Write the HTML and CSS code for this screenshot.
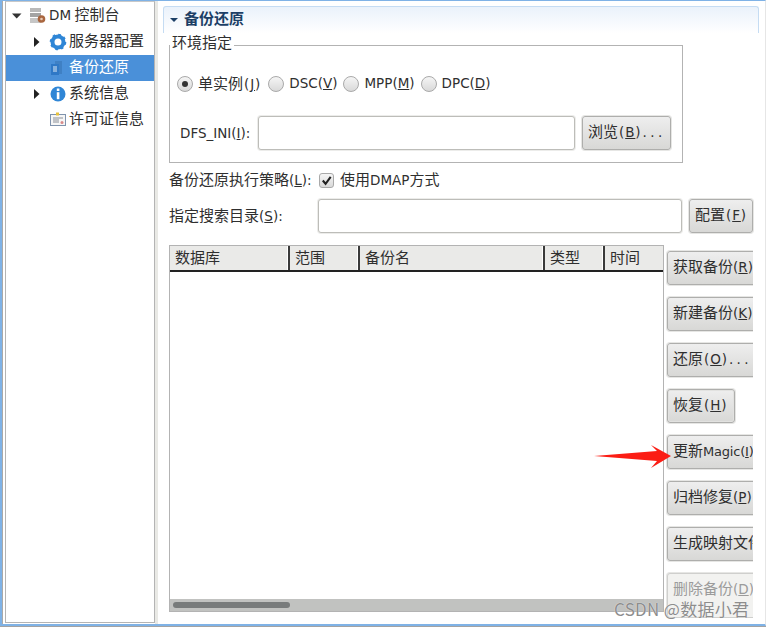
FILE: index.html
```html
<!DOCTYPE html>
<html lang="zh">
<head>
<meta charset="utf-8">
<title>DM 控制台</title>
<link rel="stylesheet" href="styles.css">
</head>
<body>
<div class="app">
  <aside class="tree">
    <div class="node">
      <svg class="tw" viewBox="0 0 12 12"><path d="M1 3.500h9.500L5.700 8.500z" fill="#333"/></svg>
      <svg class="ic" viewBox="0 0 18 18"><rect x="1" y="1" width="11" height="4" fill="#b9b9b9"/><rect x="1" y="6" width="11" height="4" fill="#a4a4a4"/><rect x="1" y="11" width="11" height="5" fill="#c6c6c6"/><circle cx="12.500" cy="12" r="3.800" fill="#a9663f"/><circle cx="12.500" cy="12" r="1.300" fill="#e6c9b5"/></svg>
      <span class="nl"><span class="l">DM</span> 控制台</span>
    </div>
    <div class="node sub">
      <svg class="tw" viewBox="0 0 12 12"><path d="M3 1l5.500 5L3 11z" fill="#222"/></svg>
      <svg class="ic" viewBox="0 0 18 18"><circle cx="9" cy="9" r="5.500" fill="none" stroke="#2f86d6" stroke-width="4"/><circle cx="9" cy="9" r="7.300" fill="none" stroke="#2f86d6" stroke-width="2" stroke-dasharray="2.600 3.130"/></svg>
      <span class="nl">服务器配置</span>
    </div>
    <div class="node sub sel">
      <span class="tw"></span>
      <svg class="ic" viewBox="0 0 18 18"><path d="M6 2h7v13H6z" fill="#3f80c4"/><path d="M2 5h8v11H2z" fill="#2f78c6"/><path d="M4 8h4M4 10h4M4 12h4" stroke="#dfeaf6" stroke-width="1"/></svg>
      <span class="nl">备份还原</span>
    </div>
    <div class="node sub">
      <svg class="tw" viewBox="0 0 12 12"><path d="M3 1l5.500 5L3 11z" fill="#222"/></svg>
      <svg class="ic" viewBox="0 0 18 18"><circle cx="9" cy="9" r="7.500" fill="#2f86d6"/><rect x="7.800" y="3.500" width="2.600" height="2.500" fill="#fff"/><rect x="7.800" y="7.200" width="2.600" height="7" fill="#fff"/></svg>
      <span class="nl">系统信息</span>
    </div>
    <div class="node sub">
      <span class="tw"></span>
      <svg class="ic" viewBox="0 0 18 18"><rect x="1.500" y="3.500" width="15" height="11" fill="#f6f6f6" stroke="#7f93ad"/><path d="M4 7h10M4 9h6M4 11h6" stroke="#8a8f98"/><rect x="7" y="1.500" width="3" height="3" fill="#e8c23c"/><circle cx="13" cy="11.500" r="1.500" fill="#d98a8a"/></svg>
      <span class="nl">许可证信息</span>
    </div>
  </aside>
  <div class="sash"></div>
  <main class="main">
    <header class="sec-head">
      <svg class="sec-tw" viewBox="0 0 10 10"><path d="M1 3h8L5 7z" fill="#1c3f66"/></svg>
      <h1 class="sec-title">备份还原</h1>
    </header>
    <div class="form">
      <section class="group">
        <span class="legend">环境指定</span>
        <div class="radios">
          <label class="radio first"><span class="dot on"></span><span class="up">单实例<span class="l wide">(<u>J</u>)</span></span></label>
          <label class="radio"><span class="dot"></span><span class="l up">DSC(<u>V</u>)</span></label>
          <label class="radio"><span class="dot"></span><span class="l up">MPP(<u>M</u>)</span></label>
          <label class="radio"><span class="dot"></span><span class="l up">DPC(<u>D</u>)</span></label>
        </div>
        <div class="dfs">
          <span class="dfs-label l">DFS_INI(<u>I</u>):</span>
          <span class="input dfs-input"></span>
          <button class="btn browse">浏览<span class="l wide">(<u>B</u>)<span class="dots">...</span></span></button>
        </div>
      </section>
      <div class="strategy">
        <span class="up strategy-label">备份还原执行策略<span class="l">(<u>L</u>):</span></span>
        <span class="check"><svg viewBox="0 0 14 14"><path d="M3 7l3 3.500L11.500 3" fill="none" stroke="#222" stroke-width="2.200"/></svg></span>
        <span class="up">使用<span class="l">DMAP</span>方式</span>
      </div>
      <div class="search">
        <span class="search-label up">指定搜索目录<span class="l">(<u>S</u>):</span></span>
        <span class="input search-input"></span>
        <button class="btn cfg">配置<span class="l wide">(<u>F</u>)</span></button>
      </div>
      <div class="lower">
        <div class="table">
          <div class="thead">
            <span class="th c1">数据库</span>
            <span class="th c2">范围</span>
            <span class="th c3">备份名</span>
            <span class="th c4">类型</span>
            <span class="th c5">时间</span>
          </div>
          <div class="tbody"></div>
          <div class="hbar"><span class="thumb"></span></div>
        </div>
        <div class="actions">
          <button class="btn act">获取备份<span class="l">(<u>R</u>)</span></button>
          <button class="btn act">新建备份<span class="l">(<u>K</u>)</span></button>
          <button class="btn act">还原<span class="l wide">(<u>O</u>)<span class="dots">...</span></span></button>
          <button class="btn act short">恢复<span class="l wide">(<u>H</u>)</span></button>
          <button class="btn act">更新<span class="l magic">Magic(<u>I</u>)</span></button>
          <button class="btn act">归档修复<span class="l">(<u>P</u>)</span></button>
          <button class="btn act">生成映射文件</button>
          <button class="btn act off">删除备份<span class="l">(<u>D</u>)</span></button>
        </div>
      </div>
    </div>
  </main>
  <svg class="arrow" viewBox="0 0 80 26"><path d="M1 12l63-5-6-6 20 11-20 12 6-7z" fill="#fb1d14"/></svg>
  <span class="mark">CSDN @数据小君</span>
</div>
</body>
</html>
```
FILE: styles.css
```css
* { box-sizing: border-box; }
html { background: #a3a3a3; }
html, body { margin: 0; padding: 0; }
body {
  font-family: "Noto Sans CJK SC", "DejaVu Sans", sans-serif;
  font-size: 15px;
  color: #2f2f2f;
}
.l { font-family: "DejaVu Sans", sans-serif; font-size: 13.500px; }
.wide { letter-spacing: 0.900px; margin-left: 1px; }
.dots { letter-spacing: 3.400px; margin-left: 1px; }
.magic { font-size: 13px; letter-spacing: -0.200px; }
.up { padding-bottom: 3px; }
u { text-underline-offset: 1px; }

.app {
  position: relative;
  width: 766px;
  height: 626px;
  display: flex;
  overflow: hidden;
  background: #fff;
  border-top: 1px solid #7fb2e6;
  border-left: 2px solid #7fb2e6;
  border-bottom: 2px solid #7fb2e6;
  border-right: 1px solid #e6e6e6;
  box-shadow: inset 1px 0 0 #a9a9a9;
}

.tree {
  width: 150px;
  height: 622px;
  margin-left: 3px;
  border: 1px solid #b4b4b4;
  border-top-color: #c8c8c8;
  padding-top: 1px;
  flex: none;
}
.node {
  height: 26px;
  display: flex;
  align-items: center;
  padding-left: 5px;
  white-space: nowrap;
}
.node.sub { padding-left: 25px; }
.tw { width: 12px; height: 12px; flex: none; display: block; }
.ic { width: 18px; height: 18px; flex: none; margin-left: 6px; }
.node .nl { margin-left: 1px; padding-bottom: 5px; }
.node.sub .nl { margin-left: 2px; }
.node:first-child .nl { margin-left: 2px; }
.sel { background: #4a90d9; color: #fff; }

.sash { width: 3px; height: 623px; background: #e9e9e5; flex: none; }

.main { flex: 1; min-width: 0; padding: 5px 0 0 5px; }
.sec-head {
  width: 596px;
  height: 27px;
  display: flex;
  align-items: center;
  padding-left: 5px;
  border: 1px solid #c5dcf3;
  border-bottom: 0;
  border-radius: 3px 3px 0 0;
  background: linear-gradient(#eaf2fb, #fff);
}
.sec-tw { width: 10px; height: 10px; flex: none; }
.sec-title {
  margin: 0 0 0 5px;
  padding-bottom: 6px;
  font-size: 15px;
  font-weight: 700;
  color: #1c3f66;
}

.form { padding-left: 6px; width: 596px; }

.group {
  position: relative;
  width: 514px;
  height: 118px;
  margin-top: 12px;
  border: 1px solid #b3b3b3;
  padding: 27px 0 0 7px;
}
.legend {
  position: absolute;
  left: 0;
  top: -13px;
  padding: 0 2px;
  background: #fff;
  line-height: 18px;
}
.radios { display: flex; align-items: center; height: 22px; }
.radio { display: flex; align-items: center; gap: 5px; margin-right: 6px; white-space: nowrap; }
.radio.first { margin-right: 7px; }
.dot {
  width: 16px;
  height: 16px;
  border-radius: 50%;
  border: 1px solid #a9a9a9;
  background: linear-gradient(#f5f5f5, #d9d9d9);
  flex: none;
  display: flex;
  align-items: center;
  justify-content: center;
}
.dot.on::after {
  content: "";
  width: 6px;
  height: 6px;
  border-radius: 50%;
  background: #333;
}
.dfs { display: flex; align-items: center; height: 34px; margin-top: 21px; padding-left: 3px; }
.dfs-label { width: 78px; flex: none; white-space: nowrap; }

.input {
  display: block;
  height: 34px;
  background: #fff;
  border: 1px solid #bdbdb9;
  border-radius: 3px;
  box-shadow: 0 0 0 1px #ececea;
}
.dfs-input { width: 317px; flex: none; }

.btn {
  height: 34px;
  padding: 0 0 5px 5px;
  font: inherit;
  color: #2f2f2f;
  text-align: left;
  white-space: nowrap;
  overflow: hidden;
  border: 1px solid #aeaeac;
  border-radius: 3px;
  background: linear-gradient(#eeeeee, #d8d8d6);
  box-shadow: 0 0 0 1px #e6e6e4;
  flex: none;
}
.browse { width: 89px; margin-left: 7px; }
.strategy {
  display: flex;
  align-items: center;
  height: 20px;
  margin-top: 7px;
  white-space: nowrap;
}
.strategy-label { width: 150px; flex: none; }
.check {
  width: 15px;
  height: 15px;
  margin: 0 6px 0 0;
  border: 1px solid #a9a9a9;
  border-radius: 3px;
  background: linear-gradient(#f5f5f5, #d9d9d9);
  flex: none;
  display: flex;
}
.check svg { width: 13px; height: 13px; }
.search { display: flex; align-items: center; height: 34px; margin-top: 9px; }
.search-label { width: 149px; flex: none; white-space: nowrap; }
.search-input { width: 364px; flex: none; }
.cfg { width: 64px; margin-left: 7px; }

.lower { display: flex; margin-top: 12px; height: 367px; }
.table {
  width: 495px;
  flex: none;
  border: 1px solid #b3b3b3;
  display: flex;
  flex-direction: column;
}
.thead {
  display: flex;
  height: 26px;
  flex: none;
  background: #eaeae8;
  border-bottom: 2px solid #222;
}
.th {
  height: 24px;
  line-height: 21px;
  padding-left: 5px;
  border-right: 2px solid #3a3a3a;
  flex: none;
  box-shadow: inset -1px 0 0 #fff;
}
.c1 { width: 120px; }
.c2 { width: 70px; }
.c3 { width: 185px; }
.c4 { width: 60px; }
.c5 { width: 58px; border-right: 0; box-shadow: none; }
.tbody { flex: 1; background: #fff; }
.hbar {
  height: 12px;
  flex: none;
  background: #c1c2c0;
  display: flex;
  align-items: center;
  padding-left: 3px;
}
.thumb { display: block; width: 117px; height: 6px; border-radius: 3px; background: #787b7b; }

.actions {
  width: 87px;
  margin-left: 2px;
  padding: 6px 0 0 1px;
  height: 373px;
  flex: none;
  overflow: hidden;
  display: flex;
  flex-direction: column;
  align-items: flex-start;
  gap: 12px;
}
.act { width: 100px; }
.act.short { width: 68px; box-shadow: 0 0 0 1px #e6e6e4, inset 0 0 0 1px #e2e2e0; }
.act.off { color: #9b9b9b; background: #f2f2f0; border-color: #cfcfcd; height: 45px; padding-bottom: 16px; }

.arrow { position: absolute; left: 591px; top: 443px; width: 80px; height: 26px; }
.mark {
  position: absolute;
  left: 612px;
  top: 595px;
  font-size: 17px;
  letter-spacing: 0.300px;
  color: #8d8d8d;
  text-shadow: 0 0 1px #fff;
  white-space: nowrap;
}
```
